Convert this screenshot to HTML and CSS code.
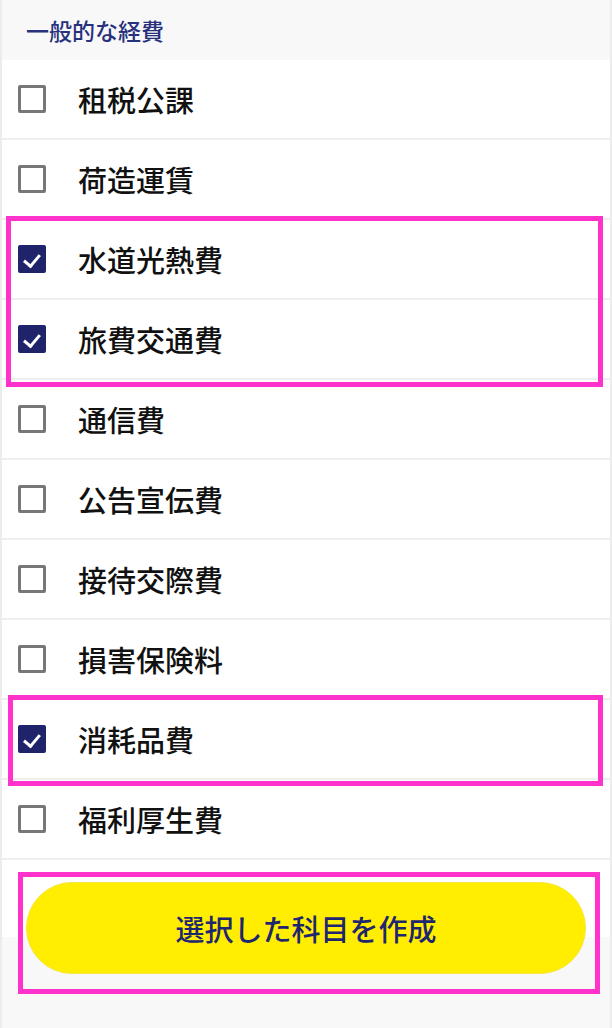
FILE: index.html
```html
<!DOCTYPE html>
<html lang="ja">
<head>
    <meta charset="UTF-8">
    <meta name="viewport" content="width=device-width, initial-scale=1.0">
    <title>科目の選択</title>
    <link rel="stylesheet" href="styles.css">
</head>
<body>
    <div class="sheet">
        <div class="group-title">一般的な経費</div>

        <ul class="account-list">
            <li class="account-row"><span class="check"></span><span class="name">租税公課</span></li>
            <li class="account-row"><span class="check"></span><span class="name">荷造運賃</span></li>
            <li class="account-row"><span class="check is-checked"></span><span class="name">水道光熱費</span></li>
            <li class="account-row"><span class="check is-checked"></span><span class="name">旅費交通費</span></li>
            <li class="account-row"><span class="check"></span><span class="name">通信費</span></li>
            <li class="account-row"><span class="check"></span><span class="name">公告宣伝費</span></li>
            <li class="account-row"><span class="check"></span><span class="name">接待交際費</span></li>
            <li class="account-row"><span class="check"></span><span class="name">損害保険料</span></li>
            <li class="account-row"><span class="check is-checked"></span><span class="name">消耗品費</span></li>
            <li class="account-row"><span class="check"></span><span class="name">福利厚生費</span></li>
        </ul>

        <div class="footer">
            <button class="create-btn" type="button">選択した科目を作成</button>
        </div>

        <!-- Highlight annotations -->
        <div class="mark mark-utilities"></div>
        <div class="mark mark-supplies"></div>
        <div class="mark mark-button"></div>
    </div>
</body>
</html>
```

FILE: styles.css
```css
/* Reset and base styles */
* {
    box-sizing: border-box;
}

body {
    margin: 0;
    padding: 0;
    font-family: "Noto Sans CJK JP", "Noto Sans", sans-serif;
    background-color: #f8f8f8;
    color: #111;
}

.sheet {
    position: relative;
    width: 612px;
    height: 1028px;
    background: #f8f8f8;
    border-left: 2px solid #ececec;
    border-right: 2px solid #ececec;
    overflow: hidden;
}

/* Group header */
.group-title {
    height: 60px;
    padding-left: 24px;
    display: flex;
    align-items: center;
    font-size: 23px;
    font-weight: 500;
    color: #27317c;
    background: #f8f8f8;
}

/* Account rows */
.account-list {
    list-style: none;
    margin: 0;
    padding: 0;
    background: #fff;
}

.account-row {
    height: 80px;
    display: flex;
    align-items: center;
    gap: 32px;
    padding-left: 16px;
    border-bottom: 2px solid #eeeeee;
}

.check {
    width: 28px;
    height: 28px;
    flex-shrink: 0;
    border: 3px solid #777;
    border-radius: 2px;
    background: #fff;
    position: relative;
}

.check.is-checked {
    border-color: #1f246a;
    background: #1f246a;
}

.check.is-checked::after {
    content: "";
    position: absolute;
    left: 6px;
    top: 3px;
    width: 7px;
    height: 13px;
    border-right: 3px solid #fff;
    border-bottom: 3px solid #fff;
    transform: rotate(40deg);
}

.name {
    font-size: 29px;
    font-weight: 500;
    line-height: 1;
}

/* Footer with button */
.footer {
    padding: 22px 24px 0 24px;
    background: linear-gradient(#fff 0, #fff 77px, #f8f8f8 77px);
    height: 168px;
}

.create-btn {
    display: block;
    width: 100%;
    height: 92px;
    border: 1px solid #f5e640;
    border-radius: 46px;
    background: #ffee00;
    color: #1f2670;
    font-family: "Noto Sans CJK JP", "Noto Sans", sans-serif;
    font-size: 29px;
    font-weight: 500;
    cursor: pointer;
}

/* Pink annotation boxes */
.mark {
    position: absolute;
    border: 5px solid #ff33cc;
    pointer-events: none;
}

.mark-utilities {
    left: 4px;
    top: 216px;
    width: 597px;
    height: 171px;
}

.mark-supplies {
    left: 6px;
    top: 695px;
    width: 595px;
    height: 91px;
}

.mark-button {
    left: 16px;
    top: 872px;
    width: 582px;
    height: 122px;
}
```
